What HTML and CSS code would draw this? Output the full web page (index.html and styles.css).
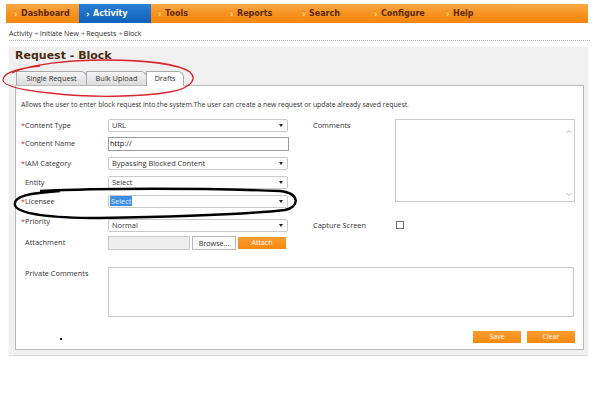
FILE: index.html
```html
<!DOCTYPE html>
<html>
<head>
<meta charset="utf-8">
<link rel="stylesheet" href="styles.css">
</head>
<body>
<div class="page">
  <nav class="topnav">
    <div class="nav-item"><span class="chev">›</span>Dashboard</div>
    <div class="nav-item active"><span class="chev">›</span>Activity</div>
    <div class="nav-item"><span class="chev">›</span>Tools</div>
    <div class="nav-item"><span class="chev">›</span>Reports</div>
    <div class="nav-item"><span class="chev">›</span>Search</div>
    <div class="nav-item"><span class="chev">›</span>Configure</div>
    <div class="nav-item"><span class="chev">›</span>Help</div>
  </nav>

  <div class="breadcrumb">Activity <span class="arr">➔</span> Initiate New <span class="arr">➔</span> Requests <span class="arr">➔</span> Block</div>

  <section class="panel">
    <h1 class="title">Request - Block</h1>
    <div class="tabs">
      <div class="tab">Single Request</div>
      <div class="tab">Bulk Upload</div>
      <div class="tab active">Drafts</div>
    </div>
    <div class="box">
      <p class="desc">Allows the user to enter block request into the system.The user can create a new request or update already saved request.</p>
      <div class="form">
        <div class="label r1"><span class="req">*</span>Content Type</div>
        <div class="select r1"><span>URL</span><i class="caret"></i></div>
        <div class="label rlabel r1">Comments</div>
        <div class="textarea comments">
          <svg class="sb" width="8" height="70" viewBox="0 0 8 70"><path d="M1.5 5 L4 2.5 L6.5 5" fill="none" stroke="#a8a8a8" stroke-width="0.9"/><path d="M1.5 65 L4 67.5 L6.5 65" fill="none" stroke="#a8a8a8" stroke-width="0.9"/></svg>
        </div>

        <div class="label r2"><span class="req">*</span>Content Name</div>
        <div class="input r2">http://</div>

        <div class="label r3"><span class="req">*</span>IAM Category</div>
        <div class="select r3"><span>Bypassing Blocked Content</span><i class="caret"></i></div>

        <div class="label r4 nostar">Entity</div>
        <div class="select r4"><span>Select</span><i class="caret"></i></div>

        <div class="label r5"><span class="req">*</span>Licensee</div>
        <div class="select r5"><span class="hl">Select</span><i class="caret"></i></div>

        <div class="label r6 up"><span class="req">*</span>Priority</div>
        <div class="select r6"><span>Normal</span><i class="caret"></i></div>
        <div class="label rlabel r6">Capture Screen</div>
        <div class="check r6"></div>

        <div class="label r7 nostar">Attachment</div>
        <div class="attach r7">
          <div class="file"></div>
          <div class="browse">Browse...</div>
          <div class="btn attach-btn">Attach</div>
        </div>

        <div class="label r8 nostar">Private Comments</div>
        <div class="textarea private"></div>
      </div>
      <div class="actions">
        <span class="dot"></span>
        <div class="btn">Save</div>
        <div class="btn">Clear</div>
      </div>
    </div>
  </section>

  <svg class="marks" width="593" height="407" viewBox="0 0 593 407">
    <path d="M12 73 C30 64 70 60 105 60 C145 60 178 64 190 72 C197 79 192 88 170 92 C140 97 90 98 50 93 C20 90 3 86 3 80 C3 74 12 69 40 66" fill="none" stroke="#d9252a" stroke-width="1.3"/>
    <path d="M40 191 C100 188 200 188 280 191 C300 193 300 207 285 210 C240 215 160 217 100 218 C50 218 17 214 15 205 C13 196 30 193 60 191" fill="none" stroke="#000" stroke-width="2.4"/>
  </svg>
</div>
</body>
</html>
```

FILE: styles.css
```css
* { box-sizing: border-box; }

body {
  margin: 0;
  background: #fff;
  font-family: "Open Sans", "Noto Sans", sans-serif;
  color: #333;
}

.page {
  position: relative;
  width: 593px;
  height: 407px;
  overflow: hidden;
  padding-top: 4px;
}

/* top navigation */
.topnav {
  display: flex;
  margin-left: 6px;
  width: 582px;
  height: 19px;
  padding-left: 1px;
  background: linear-gradient(#fbaa45, #f7901c 55%, #f5870f);
}

.nav-item {
  width: 72px;
  display: flex;
  align-items: center;
  gap: 3px;
  padding-left: 7px;
  font-family: "DejaVu Sans", sans-serif;
  font-weight: bold;
  font-size: 8px;
  color: #5c2a02;
}

.nav-item.active {
  background: linear-gradient(#2a7fd6, #0f5fb7);
  color: #fff;
}

.chev {
  font-size: 9px;
  color: #fde58a;
  width: 4px;
}

.nav-item.active .chev { color: #fff; }

/* breadcrumb */
.breadcrumb {
  margin: 5px 0 0 9px;
  width: 581px;
  font-size: 7.2px;
  letter-spacing: -0.1px;
  line-height: 10px;
  color: #333;
  padding-bottom: 2px;
  border-bottom: 1px dotted #b0b0b0;
}

.arr {
  font-family: "DejaVu Sans", sans-serif;
  font-size: 5px;
  color: #777;
  vertical-align: 1px;
}

/* panel */
.panel {
  margin: 6px 0 0 9px;
  width: 579px;
  background: #f0f0f0;
  padding: 2px 4px 5px 6px;
  box-shadow: 0 1px 1px #ddd;
}

.title {
  margin: 0;
  font-family: "DejaVu Sans", sans-serif;
  font-size: 11px;
  line-height: 14px;
  font-weight: bold;
  color: #4a2a0c;
}

.tabs {
  display: flex;
  margin: 8px 0 0 1px;
  height: 14px;
}

.tab {
  font-size: 7.4px;
  line-height: 13px;
  color: #333;
  text-align: center;
  background: linear-gradient(#f4f4f4, #dcdcdc);
  border: 1px solid #a9a9a9;
  border-bottom: none;
  border-radius: 0 6px 0 0;
  margin-right: -1px;
}

.tab:nth-child(1) { width: 71px; }
.tab:nth-child(2) { width: 61px; }
.tab.active {
  width: 38px;
  background: #fff;
  height: 15px;
  position: relative;
  z-index: 1;
}

.box {
  background: #fff;
  border: 1px solid #b8b8b8;
  padding: 14px 8px 6px 5px;
}

.desc {
  margin: 0;
  font-size: 6.9px;
  letter-spacing: -0.04px;
  line-height: 10px;
  color: #333;
}

/* form grid */
.form {
  display: grid;
  margin-top: 9px;
  grid-template-columns: 87px 181px 24px 82px 180px;
  grid-template-rows: 18px 20px 19px 19px 24px 17px 31px 50px;
  align-items: start;
}

.r1 { grid-row: 1; }
.r2 { grid-row: 2; }
.r3 { grid-row: 3; }
.r4 { grid-row: 4; }
.r5 { grid-row: 5; }
.r6 { grid-row: 6; }
.r7 { grid-row: 7; }
.r8 { grid-row: 8; }

.label {
  grid-column: 1;
  font-size: 7.4px;
  line-height: 13px;
  color: #333;
}

.label.up { margin-top: -4px; }
.label.nostar { padding-left: 4px; }
.label.rlabel { grid-column: 4; }
.label.r8 { margin-top: 0; }

.req {
  color: #d9252a;
  font-size: 7px;
  display: inline-block;
  width: 4px;
}

.select, .input {
  grid-column: 2;
  position: relative;
  height: 13px;
  border: 1px solid #c9c9c9;
  border-radius: 2px;
  font-size: 7.4px;
  line-height: 11px;
  padding-left: 3px;
  color: #333;
  width: 180px;
}

.input {
  border: 1px solid #9a9a9a;
  border-radius: 0;
  height: 14px;
  width: 181px;
  padding-left: 1px;
  color: #111;
}

.hl {
  background: #3a8ee6;
  color: #e8f0ff;
  padding: 0 1px;
  margin-left: -2px;
}

.caret {
  position: absolute;
  right: 4px;
  top: 4px;
  width: 0;
  height: 0;
  border-left: 2px solid transparent;
  border-right: 2px solid transparent;
  border-top: 3px solid #222;
}

.textarea {
  border: 1px solid #c9c9c9;
  background: #fff;
}

.comments {
  grid-column: 5;
  grid-row: 1 / 6;
  height: 83px;
  position: relative;
}

.sb {
  position: absolute;
  right: 1px;
  top: 8px;
}

.private {
  grid-column: 2 / 6;
  height: 50px;
  width: 466px;
}

.check {
  grid-column: 5;
  margin: 2px 0 0 1px;
  width: 8px;
  height: 8px;
  border: 1px solid #6d6d6d;
}

.attach {
  grid-column: 2;
  display: flex;
  align-items: start;
  gap: 2px;
}

.file {
  width: 82px;
  height: 14px;
  background: #eee;
  border: 1px solid #c9c9c9;
}

.browse {
  width: 44px;
  height: 14px;
  border: 1px solid #b9b9b9;
  background: #fafafa;
  font-size: 7.2px;
  line-height: 12px;
  text-align: center;
  color: #333;
}

.btn {
  width: 48px;
  height: 12px;
  background: linear-gradient(#fb9c30, #f58a10);
  color: #fff;
  font-size: 7px;
  line-height: 12px;
  text-align: center;
}

.attach-btn {
  margin-top: 1px;
}

.actions {
  display: flex;
  align-items: center;
  gap: 6px;
  margin-top: 14px;
}

.dot {
  width: 1.5px;
  height: 1.5px;
  background: #222;
  margin-left: 39px;
  margin-right: auto;
  margin-top: 4px;
}

/* hand-drawn annotation marks over the screenshot */
.marks {
  position: absolute;
  left: 0;
  top: 0;
  pointer-events: none;
}
```
